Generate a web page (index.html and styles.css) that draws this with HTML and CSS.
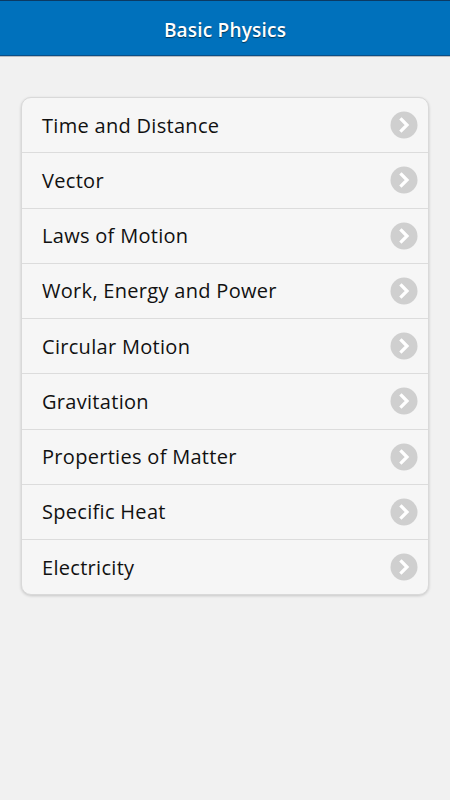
FILE: index.html
```html
<!DOCTYPE html>
<html>
<head>
<meta charset="utf-8">
<link rel="stylesheet" href="styles.css">
</head>
<body>
<header class="bar"><h1 class="title">Basic Physics</h1></header>
<main class="content">
  <ul class="list">
    <li class="row"><span class="label">Time and Distance</span><span class="chev"><svg viewBox="0 0 28 28" width="28" height="28"><circle cx="14" cy="14" r="13.5" fill="#cfcfcf"/><path d="M11.5 8.5 L17 14 L11.5 19.5" fill="none" stroke="#fff" stroke-width="3.2" stroke-linecap="square" stroke-linejoin="miter"/></svg></span></li>
    <li class="row"><span class="label">Vector</span><span class="chev"><svg viewBox="0 0 28 28" width="28" height="28"><circle cx="14" cy="14" r="13.5" fill="#cfcfcf"/><path d="M11.5 8.5 L17 14 L11.5 19.5" fill="none" stroke="#fff" stroke-width="3.2" stroke-linecap="square" stroke-linejoin="miter"/></svg></span></li>
    <li class="row"><span class="label">Laws of Motion</span><span class="chev"><svg viewBox="0 0 28 28" width="28" height="28"><circle cx="14" cy="14" r="13.5" fill="#cfcfcf"/><path d="M11.5 8.5 L17 14 L11.5 19.5" fill="none" stroke="#fff" stroke-width="3.2" stroke-linecap="square" stroke-linejoin="miter"/></svg></span></li>
    <li class="row"><span class="label">Work, Energy and Power</span><span class="chev"><svg viewBox="0 0 28 28" width="28" height="28"><circle cx="14" cy="14" r="13.5" fill="#cfcfcf"/><path d="M11.5 8.5 L17 14 L11.5 19.5" fill="none" stroke="#fff" stroke-width="3.2" stroke-linecap="square" stroke-linejoin="miter"/></svg></span></li>
    <li class="row"><span class="label">Circular Motion</span><span class="chev"><svg viewBox="0 0 28 28" width="28" height="28"><circle cx="14" cy="14" r="13.5" fill="#cfcfcf"/><path d="M11.5 8.5 L17 14 L11.5 19.5" fill="none" stroke="#fff" stroke-width="3.2" stroke-linecap="square" stroke-linejoin="miter"/></svg></span></li>
    <li class="row"><span class="label">Gravitation</span><span class="chev"><svg viewBox="0 0 28 28" width="28" height="28"><circle cx="14" cy="14" r="13.5" fill="#cfcfcf"/><path d="M11.5 8.5 L17 14 L11.5 19.5" fill="none" stroke="#fff" stroke-width="3.2" stroke-linecap="square" stroke-linejoin="miter"/></svg></span></li>
    <li class="row"><span class="label">Properties of Matter</span><span class="chev"><svg viewBox="0 0 28 28" width="28" height="28"><circle cx="14" cy="14" r="13.5" fill="#cfcfcf"/><path d="M11.5 8.5 L17 14 L11.5 19.5" fill="none" stroke="#fff" stroke-width="3.2" stroke-linecap="square" stroke-linejoin="miter"/></svg></span></li>
    <li class="row"><span class="label">Specific Heat</span><span class="chev"><svg viewBox="0 0 28 28" width="28" height="28"><circle cx="14" cy="14" r="13.5" fill="#cfcfcf"/><path d="M11.5 8.5 L17 14 L11.5 19.5" fill="none" stroke="#fff" stroke-width="3.2" stroke-linecap="square" stroke-linejoin="miter"/></svg></span></li>
    <li class="row"><span class="label">Electricity</span><span class="chev"><svg viewBox="0 0 28 28" width="28" height="28"><circle cx="14" cy="14" r="13.5" fill="#cfcfcf"/><path d="M11.5 8.5 L17 14 L11.5 19.5" fill="none" stroke="#fff" stroke-width="3.2" stroke-linecap="square" stroke-linejoin="miter"/></svg></span></li>
  </ul>
</main>
</body>
</html>
```
FILE: styles.css
```css
html, body {
  margin: 0;
  padding: 0;
}
body {
  background: #f1f1f1;
  font-family: "Open Sans", "Noto Sans", "DejaVu Sans", sans-serif;
  width: 450px;
  height: 800px;
}
.bar {
  height: 54px;
  box-sizing: content-box;
  background: #0071bc;
  border-top: 1px solid #0b3a63;
  border-bottom: 1px solid #0a4f87;
  box-shadow: 0 1px 0 #b9bcc0;
  display: flex;
  align-items: center;
  justify-content: center;
}
.title {
  margin: 3px 0 0 0;
  color: #fff;
  font-size: 19px;
  font-weight: 600;
  letter-spacing: 0.2px;
  text-shadow: 0 1px 1px rgba(0,0,0,0.55);
}
.content {
  padding: 41px 21px 0 21px;
}
.list {
  list-style: none;
  margin: 0;
  padding: 0;
  background: #f6f6f6;
  border: 1px solid #d9d9d9;
  border-radius: 10px;
  box-shadow: 0 1px 3px rgba(0,0,0,0.18);
}
.row {
  height: 54.25px;
  display: flex;
  align-items: center;
  justify-content: space-between;
  padding: 0 10px 0 20px;
  border-bottom: 1px solid #dcdcdc;
}
.row:last-child {
  border-bottom: none;
  height: 54px;
}
.label {
  font-size: 20px;
  letter-spacing: 0.3px;
  color: #111;
}
.chev {
  display: flex;
  width: 28px;
  height: 28px;
}
```
